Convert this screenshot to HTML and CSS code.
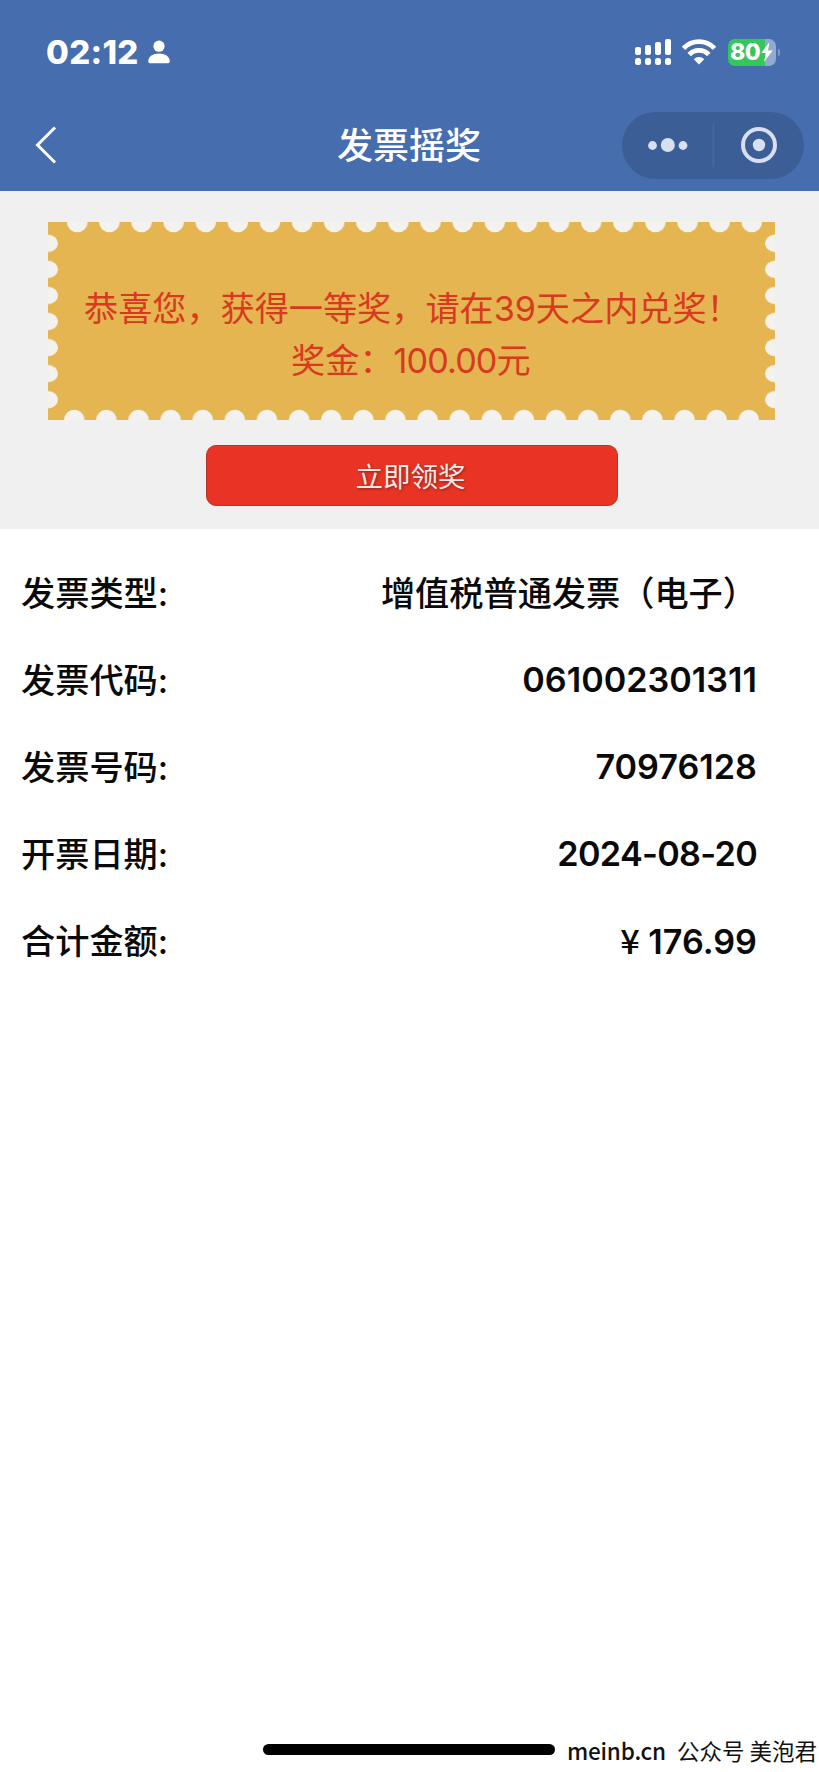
FILE: index.html
```html
<!DOCTYPE html>
<html lang="zh-CN">
<head>
<meta charset="utf-8">
<title>发票摇奖</title>
<link rel="stylesheet" href="styles.css">
</head>
<body>
<div class="screen">
  <header class="header">
    <div class="status">
      <span class="time">02:12</span>
      <svg class="person" width="22" height="24" viewBox="0 0 22 24"><circle cx="11" cy="6.2" r="5.6"/><path d="M0.3 21.2C0.3 16.5 5 13.6 11 13.6s10.7 2.9 10.7 7.6c0 1.400-.8 2.100-2.200 2.100h-17C1.100 23.300.300 22.600.300 21.200z"/></svg>
      <svg class="signal" width="36" height="26" viewBox="0 0 36 26">
        <rect x="0" y="8" width="6" height="8" rx="2"/><rect x="10" y="6" width="6" height="10" rx="2"/><rect x="20" y="3" width="6" height="13" rx="2"/><rect x="30" y="0" width="6" height="16" rx="2"/>
        <rect x="0" y="19" width="6" height="7" rx="2.500"/><rect x="10" y="19" width="6" height="7" rx="2.500"/><rect x="20" y="19" width="6" height="7" rx="2.500"/><rect x="30" y="19" width="6" height="7" rx="2.500"/>
      </svg>
      <svg class="wifi" width="34" height="26" viewBox="0 0 34 26"><g fill="none" stroke="#fff" stroke-width="4.800"><path d="M1.500 9.300C10 .3 24 .3 32.500 9.300"/><path d="M7.200 15.600C12.500 10 21.500 10 26.800 15.600"/></g><path d="M11.800 20.200c3-2.900 7.400-2.900 10.400 0L17 25.500z"/></svg>
      <div class="battery"><span>80</span><svg width="12" height="20" viewBox="0 0 12 20"><path d="M8.500 0 .3 11h4.500L3 20 11.700 8.400H7z"/></svg></div>
      <i class="battery-tip"></i>
    </div>
    <nav class="nav">
      <svg class="back" width="22" height="38" viewBox="0 0 22 38"><path d="M20 1.500 2.500 19 20 36.500"/></svg>
      <h1>发票摇奖</h1>
      <div class="capsule">
        <svg width="182" height="67" viewBox="0 0 182 67"><g fill="#d8dff0"><circle cx="30.500" cy="33.500" r="4.400"/><circle cx="45.800" cy="33" r="7"/><circle cx="61" cy="33.500" r="4.400"/><circle cx="137" cy="33" r="6.200"/></g><circle cx="137" cy="33" r="16" fill="none" stroke="#d8dff0" stroke-width="4"/><path d="M91.500 11v44" stroke="#4767a0" stroke-width="2"/></svg>
      </div>
    </nav>
  </header>

  <section class="prize">
    <div class="ticket">
      <svg class="ticket-bg" width="727" height="198" viewBox="0 0 727 198">
        <defs>
          <pattern id="top" x="13.200" y="0" width="32.120" height="11" patternUnits="userSpaceOnUse"><circle cx="16.060" cy="0" r="10.300"/></pattern>
          <pattern id="bottom" x="10.200" y="187" width="32.120" height="11" patternUnits="userSpaceOnUse"><circle cx="16.060" cy="11" r="10.300"/></pattern>
          <pattern id="left" x="0" y="8.300" width="11" height="26.060" patternUnits="userSpaceOnUse"><ellipse cx="0" cy="13.030" rx="10" ry="8.700"/></pattern>
          <pattern id="right" x="716" y="8.300" width="11" height="26.060" patternUnits="userSpaceOnUse"><ellipse cx="11" cy="13.030" rx="10" ry="8.700"/></pattern>
        </defs>
        <rect width="727" height="198" fill="#e5b551"/>
        <rect x="13.200" width="706.600" height="11" fill="url(#top)"/>
        <rect x="10.200" y="187" width="706.600" height="11" fill="url(#bottom)"/>
        <rect y="8.300" width="11" height="182.400" fill="url(#left)"/>
        <rect x="716" y="8.300" width="11" height="182.400" fill="url(#right)"/>
      </svg>
      <p class="congrats">恭喜您，获得一等奖，请在39天之内兑奖！</p>
      <p class="amount">奖金：<span>100.00</span>元</p>
    </div>
    <button class="claim">立即领奖</button>
  </section>

  <main class="details">
    <div class="row"><span>发票类型:</span><span>增值税普通发票（电子）</span></div>
    <div class="row"><span>发票代码:</span><span class="num">061002301311</span></div>
    <div class="row"><span>发票号码:</span><span class="num">70976128</span></div>
    <div class="row"><span>开票日期:</span><span class="num date">2024-08-20</span></div>
    <div class="row"><span>合计金额:</span><span class="num"><span class="yen">¥</span> 176.99</span></div>
  </main>

  <footer class="footer">
    <i class="home"></i>
    <span class="site">meinb.cn</span><span class="account">公众号 美泡君</span>
  </footer>
</div>
</body>
</html>
```
FILE: styles.css
```css
* { box-sizing: border-box; }
body, h1, p { margin: 0; }
body { background: #fff; font-family: Inter, "Noto Sans CJK SC", sans-serif; }
svg { display: block; flex: none; }
.screen { display: flex; flex-direction: column; width: 819px; height: 1772px; overflow: hidden; }

.header { height: 191px; background: #466dae; color: #fff; }
.status { display: flex; align-items: center; height: 104px; padding-left: 46px; }
.status svg { fill: #fff; }
.time { width: 102px; font-size: 33px; font-weight: 800; line-height: 40px; letter-spacing: .3px; white-space: nowrap; }
.person { width: 22px; }
.signal { margin-left: 465px; }
.wifi { margin-left: 11px; }
.battery { display: flex; align-items: center; width: 48px; height: 27px; margin-left: 12px; padding-left: 2px; border-radius: 7px; background: linear-gradient(90deg, #35c75a 37px, #92a9d0 37px); font-size: 23px; font-weight: 800; line-height: 27px; letter-spacing: -.5px; }
.battery span { width: 31px; }
.battery-tip { width: 2px; height: 7px; margin-left: 2px; border-radius: 0 2px 2px 0; background: #7f9bce; }
.nav { display: grid; grid-template-columns: 300px 1fr 182px; align-items: center; height: 82px; padding: 0 15px 0 35px; }
.back { fill: none; stroke: #fff; stroke-width: 3; }
.nav h1 { padding: 2px 0 0 2px; font-size: 36px; font-weight: 500; line-height: 50px; }
.capsule { height: 67px; border-radius: 34px; background: #3b5e96; }

.prize { display: flex; flex-direction: column; align-items: center; height: 338px; padding: 31px 0 0 4px; background: #f0f0f0; }
.ticket { position: relative; width: 727px; height: 198px; padding-top: 61px; color: #d83a20; font-size: 34.200px; line-height: 52px; }
.ticket-bg { position: absolute; inset: 0; fill: #f3f2ee; }
.ticket p { position: relative; white-space: nowrap; }
.congrats { padding-left: 36px; letter-spacing: -.05px; }
.amount { padding-left: 243px; }
.amount span { letter-spacing: -.9px; }
.claim { width: 412px; height: 61px; margin-top: 25px; padding: 0 2px 2px 0; border: 1px solid #b9342b; border-radius: 10px; background: #e93425; color: #f7e9e5; font: 400 27.500px/56px "Noto Sans CJK SC", sans-serif; text-shadow: 1px 1px 3px #84231c; }

.details { padding: 21px 62px 0 21px; color: #0a0a0a; }
.row { display: flex; justify-content: space-between; align-items: center; height: 87px; font-size: 34.200px; font-weight: 500; line-height: 50px; white-space: nowrap; }
.num { margin-top: -2px; font-weight: 600; }
.date { letter-spacing: -.7px; }
.yen { font-family: "Noto Sans CJK SC", sans-serif; font-weight: 500; }

.footer { display: flex; align-items: center; height: 45px; margin-top: auto; padding-left: 263px; color: #111; font-family: "Noto Sans CJK SC", sans-serif; font-size: 22.500px; line-height: 40px; white-space: nowrap; }
.home { flex: none; width: 292px; height: 11px; border-radius: 6px; background: #000; }
.site { width: 98px; margin-left: 12px; font-weight: 500; letter-spacing: -.2px; }
.account { margin-left: 12px; }
```
